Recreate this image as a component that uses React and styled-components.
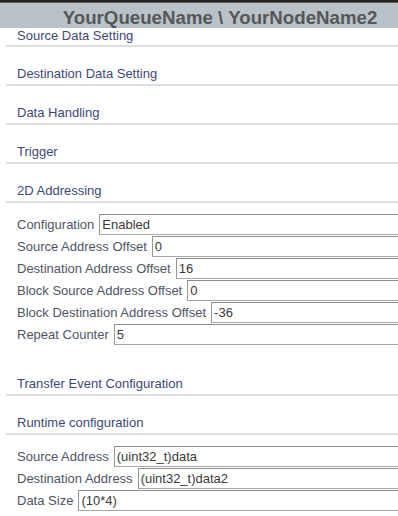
import React from 'react';
import styled, { createGlobalStyle } from 'styled-components';

const GlobalStyle = createGlobalStyle`
  html, body {
    margin: 0;
    padding: 0;
    background: #fff;
    overflow: hidden;
  }
  body {
    font-family: "Liberation Sans", Arial, sans-serif;
  }
`;

const Page = styled.div`
  width: 100%;
  display: flex;
  flex-direction: column;
  overflow: hidden;
`;

const TopStrip = styled.div`
  height: 2px;
  background: #232323;
  border-bottom: 1px solid #5a5a5a;
`;

const TitleBar = styled.div`
  height: 20px;
  padding: 5px 0 0 42px;
  background: #b9c2c8;
  text-align: center;
  font-size: 18.7px;
  line-height: 20px;
  font-weight: 700;
  color: #575757;
  white-space: nowrap;
`;

const Content = styled.div`
  display: flex;
  flex-direction: column;
  padding-left: 6px;
`;

const SectionHeader = styled.div`
  padding: ${p => (p.$first ? '0 0 2px 11px' : '19px 0 3px 11px')};
  font-size: 13px;
  line-height: 15px;
  color: #3e4977;
  border-bottom: 2px solid #d9dfe3;
`;

const FieldGroup = styled.div`
  display: flex;
  flex-direction: column;
  padding: 10px 0 12px 11px;
`;

const FieldRow = styled.div`
  display: flex;
  align-items: center;
  height: 22px;
  font-size: 13px;
  color: #4f5565;
  white-space: nowrap;
`;

const Label = styled.span`
  margin-right: 5px;
`;

const Input = styled.input`
  flex: 1;
  min-width: 0;
  height: 21px;
  box-sizing: border-box;
  margin: 0;
  padding: 0 2px;
  border: 1px solid #a8a8a8;
  border-top-color: #8c8c8c;
  border-left-color: #969696;
  border-right-width: 0;
  font-family: "Liberation Sans", Arial, sans-serif;
  font-size: 13px;
  color: #3a3a3a;
  background: #fff;
  outline: none;
`;

const addressing = [
  ['Configuration', 'Enabled'],
  ['Source Address Offset', '0'],
  ['Destination Address Offset', '16'],
  ['Block Source Address Offset', '0'],
  ['Block Destination Address Offset', '-36'],
  ['Repeat Counter', '5'],
];

const runtime = [
  ['Source Address', '(uint32_t)data'],
  ['Destination Address', '(uint32_t)data2'],
  ['Data Size', '(10*4)'],
];

function Fields({ items }) {
  return (
    <FieldGroup>
      {items.map(([label, value]) => (
        <FieldRow key={label}>
          <Label>{label}</Label>
          <Input defaultValue={value} readOnly />
        </FieldRow>
      ))}
    </FieldGroup>
  );
}

export default function App() {
  return (
    <>
      <GlobalStyle />
      <Page>
        <TopStrip />
        <TitleBar>YourQueueName \ YourNodeName2</TitleBar>
        <Content>
          <SectionHeader $first>Source Data Setting</SectionHeader>
          <SectionHeader>Destination Data Setting</SectionHeader>
          <SectionHeader>Data Handling</SectionHeader>
          <SectionHeader>Trigger</SectionHeader>
          <SectionHeader>2D Addressing</SectionHeader>
          <Fields items={addressing} />
          <SectionHeader>Transfer Event Configuration</SectionHeader>
          <SectionHeader>Runtime configuration</SectionHeader>
          <Fields items={runtime} />
        </Content>
      </Page>
    </>
  );
}
